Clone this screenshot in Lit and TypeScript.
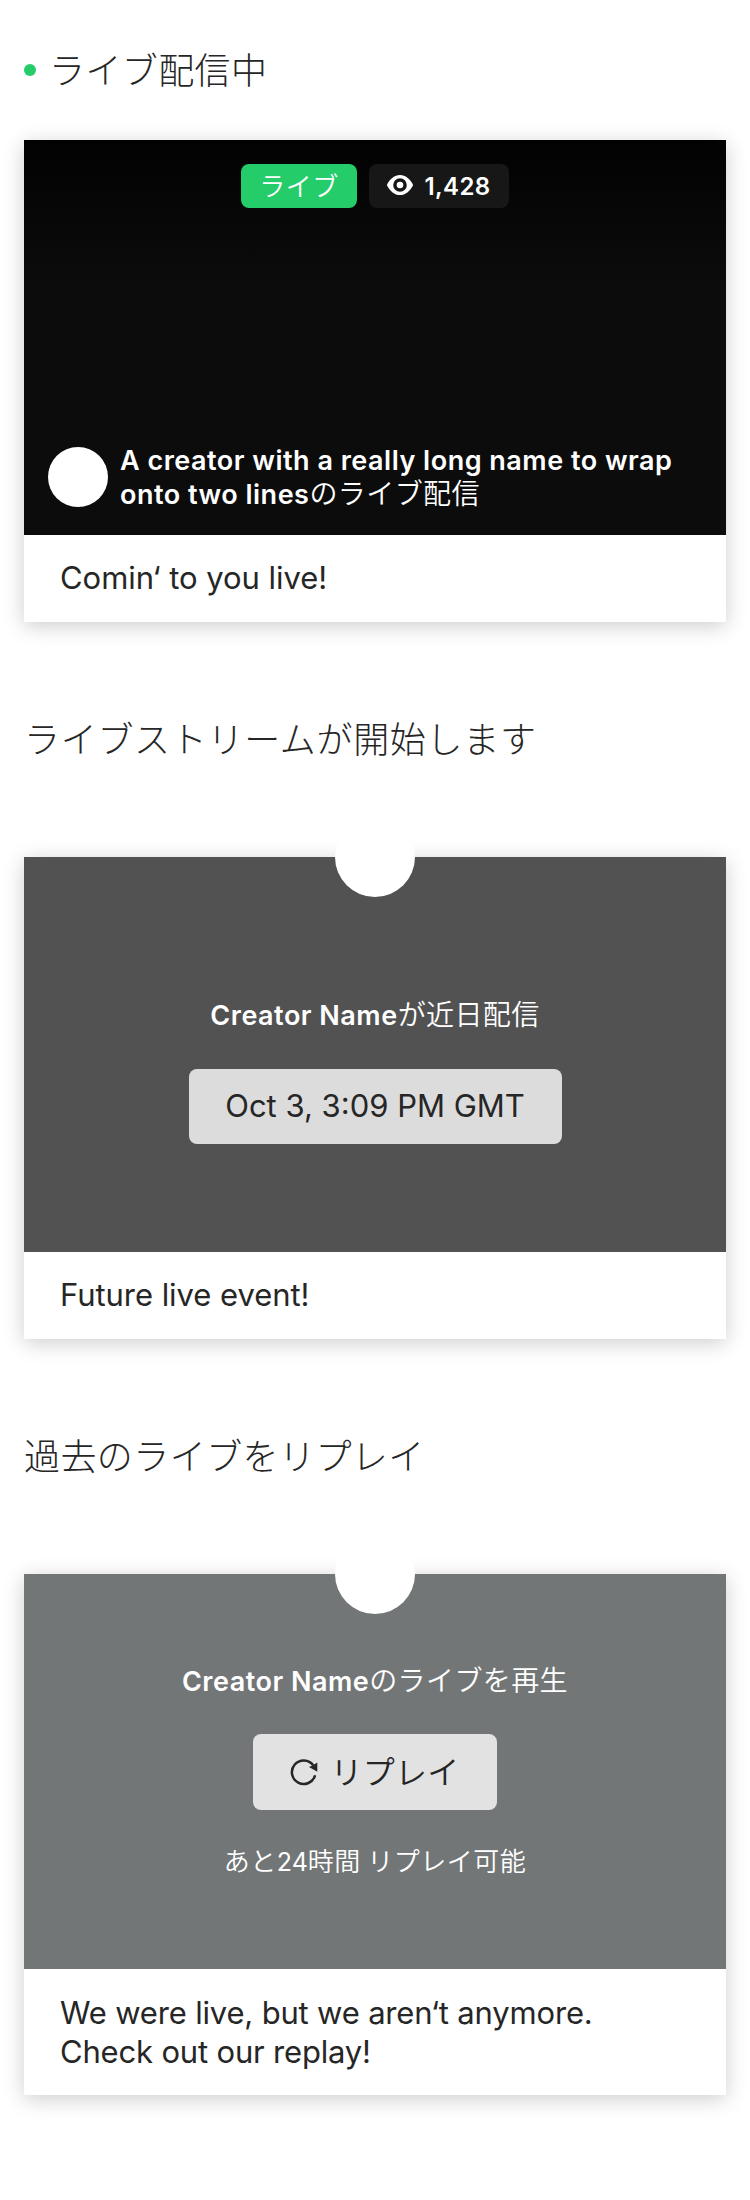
import { LitElement, html, css, svg } from "lit";
import { customElement } from "lit/decorators.js";

const eyeIcon = svg`<svg class="eye" viewBox="0 0 26 20" width="26" height="20">
  <path fill="#fff" fill-rule="evenodd" d="M13 0C7.5 0 3 4 .3 9.1a1.8 1.8 0 0 0 0 1.8C3 16 7.500 20 13 20s10-4 12.700-9.100a1.800 1.800 0 0 0 0-1.800C23 4 18.500 0 13 0Zm0 3.200a6.800 6.800 0 1 1 0 13.600a6.800 6.800 0 0 1 0-13.600Z"/>
  <circle cx="13" cy="10" r="3.300" fill="#fff"/></svg>`;

const replayIcon = svg`<svg class="replay" viewBox="0 0 28 28" width="28" height="28">
  <path fill="none" stroke="#262626" stroke-width="2.500" d="M25.100 17.200A11.800 11.800 0 1 1 23.200 7.200"/>
  <path fill="#262626" d="M27.300 4.500V13.800L19 9.100L22.600 7.600Z"/></svg>`;

@customElement("app-root")
export class AppRoot extends LitElement {
  static styles = css`
    :host {
      display: block;
      min-height: 2200px;
      padding: 0 24px;
      box-sizing: border-box;
      background: #fff;
      color: #262626;
      font-family: Inter, "Noto Sans CJK JP", sans-serif;
    }
    * { box-sizing: border-box; }
    .jp {
      font-family: "Noto Sans CJK JP", sans-serif;
      font-weight: 350;
    }
    h2 {
      margin: 0;
      height: 235px;
      padding-bottom: 6px;
      display: flex;
      align-items: center;
      font-size: 36px;
      line-height: 44px;
      letter-spacing: 0.43px;
    }
    h2.jp { font-weight: 300; }
    h2.first { height: 140px; gap: 13px; padding-bottom: 0; letter-spacing: 0.4px; }
    h2.first .label { padding-bottom: 4px; }
    h2.wide { letter-spacing: 0.69px; }
    .dot {
      width: 12px;
      height: 12px;
      border-radius: 50%;
      background: #25cc6a;
    }
    .card { box-shadow: 0 4px 20px rgba(0, 0, 0, 0.2); background: #fff; }
    .media {
      height: 395px;
      display: flex;
      flex-direction: column;
      align-items: center;
      color: #fff;
    }
    .live {
      padding: 24px;
      justify-content: space-between;
      background: linear-gradient(#020202, #0c0c0c 150px);
    }
    .upcoming { background: #525252; }
    .past { background: #727676; }
    .badges { display: flex; gap: 12px; }
    .badge {
      height: 44px;
      border-radius: 8px;
      display: flex;
      align-items: center;
      justify-content: center;
    }
    .on {
      width: 116px;
      padding-bottom: 2px;
      background: #25cc6a;
      font-size: 26px;
      line-height: 42px;
      letter-spacing: 0.5px;
    }
    .eye { margin-bottom: 2px; }
    .viewers {
      width: 140px;
      gap: 11px;
      background: #171717;
      font-size: 24px;
      font-weight: 600;
      letter-spacing: 0.4px;
    }
    .creator {
      width: 100%;
      margin-bottom: -1px;
      display: flex;
      align-items: center;
      gap: 12px;
    }
    .avatar {
      width: 60px;
      height: 60px;
      margin-bottom: 1px;
      flex: none;
      border-radius: 50%;
      background: #fff;
    }
    .name {
      font-size: 27px;
      line-height: 34px;
      font-weight: 600;
      letter-spacing: 0.5px;
      white-space: nowrap;
    }
    .creator .name { padding-top: 1px; }
    .name div { height: 34px; }
    .name .jp { font-size: 28px; line-height: 0; letter-spacing: 0.4px; }
    .notch {
      width: 80px;
      height: 80px;
      flex: none;
      margin-top: -40px;
      border-radius: 50%;
      background: #fff;
    }
    .upcoming .name { margin: 102px 0 36px; height: 34px; }
    .past .name { margin: 51px 0 35px; height: 34px; }
    .button {
      border-radius: 8px;
      display: flex;
      align-items: center;
      justify-content: center;
      color: #262626;
      font-size: 31px;
    }
    .upcoming .button { width: 373px; height: 75px; padding-bottom: 2px; background: #dcdcdc; }
    .past .button { width: 244px; height: 76px; gap: 12px; background: #e2e2e2; }
    .button .jp { font-size: 32px; line-height: 44px; letter-spacing: 0.3px; padding-bottom: 4px; }
    .note {
      height: 34px;
      margin-top: 33px;
      font-size: 26px;
      line-height: 34px;
      letter-spacing: 0.5px;
    }
    .note .num { font-family: Inter, sans-serif; font-size: 25px; font-weight: 400; letter-spacing: 0; }
    .caption {
      padding: 23px 36px 25px;
      font-size: 31px;
      line-height: 39px;
      letter-spacing: -0.05px;
    }
    .caption.tight { padding: 24px 36px; letter-spacing: -0.18px; }
  `;

  render() {
    return html`
      <h2 class="jp first"><span class="dot"></span><span class="label">ライブ配信中</span></h2>
      <section class="card">
        <div class="media live">
          <div class="badges">
            <div class="badge on jp">ライブ</div>
            <div class="badge viewers">${eyeIcon}<span>1,428</span></div>
          </div>
          <div class="creator">
            <div class="avatar"></div>
            <div class="name">
              <div>A creator with a really long name to wrap</div>
              <div>onto two lines<span class="jp">のライブ配信</span></div>
            </div>
          </div>
        </div>
        <div class="caption">Comin‘ to you live!</div>
      </section>

      <h2 class="jp wide">ライブストリームが開始します</h2>
      <section class="card">
        <div class="media upcoming">
          <div class="notch"></div>
          <div class="name">Creator Name<span class="jp">が近日配信</span></div>
          <div class="button">Oct 3, 3:09 PM GMT</div>
        </div>
        <div class="caption">Future live event!</div>
      </section>

      <h2 class="jp">過去のライブをリプレイ</h2>
      <section class="card">
        <div class="media past">
          <div class="notch"></div>
          <div class="name">Creator Name<span class="jp">のライブを再生</span></div>
          <div class="button">${replayIcon}<span class="jp">リプレイ</span></div>
          <div class="note jp">あと<span class="num">24</span>時間 リプレイ可能</div>
        </div>
        <div class="caption tight">We were live, but we aren‘t anymore.<br />Check out our replay!</div>
      </section>
    `;
  }
}
